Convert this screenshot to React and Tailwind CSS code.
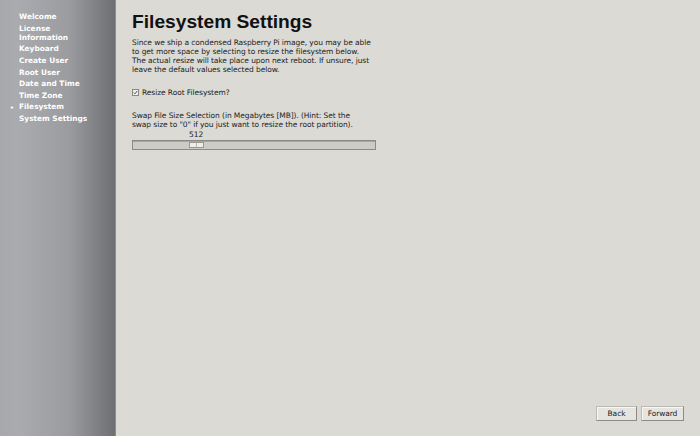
import React from 'react';

const steps = [
  ['Welcome'],
  ['License', 'Information'],
  ['Keyboard'],
  ['Create User'],
  ['Root User'],
  ['Date and Time'],
  ['Time Zone'],
  ['Filesystem'],
  ['System Settings'],
];

const Sidebar = ({ current }) => (
  <div className="w-[116px] h-full shrink-0 bg-[linear-gradient(to_right,#a6a8ab_0%,#a9abae_15%,#9a9c9f_60%,#6d6f72_100%)] border-r border-[#8a8d88] pt-[11px] pl-[19px] pr-2">
    {steps.map((s) => (
      <div key={s[0]} className="relative text-[7.4px] leading-[9px] py-[1.3px] font-bold text-white whitespace-nowrap">
        {s[0] === current && (
          <span className="absolute -left-[8px] top-[1.5px] text-[5.5px]">▸</span>
        )}
        {s.map((l) => (
          <span key={l} className="block">{l}</span>
        ))}
      </div>
    ))}
  </div>
);

const Button = ({ children, w }) => (
  <button className={`${w} h-[15px] text-[7.5px] tracking-[-0.08px] leading-none text-[#222] bg-[#e6e4df] border border-[#bdbab4] border-b-[#8e8b85] border-r-[#8e8b85] shadow-[inset_1px_1px_0_#f7f6f3]`}>
    {children}
  </button>
);

export default function App() {
  return (
    <div className="w-[700px] h-[436px] flex bg-[#dcdad5] text-[#1a1a1a] font-['DejaVu_Sans',sans-serif] overflow-hidden">
      <Sidebar current="Filesystem" />
      <div className="flex-1 flex flex-col pl-[16px] pr-[16px] pt-[10px] pb-[15px]">
        <h1 className="font-['Liberation_Sans',Arial,sans-serif] font-bold text-[19.2px] leading-[24px] text-[#111]">
          Filesystem Settings
        </h1>
        <p className="mt-[4px] w-[240px] text-[7.5px] tracking-[-0.09px] leading-[9px] text-[#222]">
          Since we ship a condensed Raspberry Pi image, you may be able to get more space by selecting to resize the filesystem below. The actual resize will take place upon next reboot. If unsure, just leave the default values selected below.
        </p>
        <label className="mt-[14px] flex items-center gap-[3px] text-[7.5px] tracking-[-0.08px] leading-[9px] text-[#222]">
          <span className="w-[7px] h-[7px] border border-[#8a8883] bg-[#f0efeb] flex items-center justify-center">
            <svg width="5" height="5" viewBox="0 0 5 5">
              <path d="M0.8 2.6 L2 3.8 L4.2 1" fill="none" stroke="#444" strokeWidth="0.9" />
            </svg>
          </span>
          Resize Root Filesystem?
        </label>
        <p className="mt-[14px] w-[236px] text-[7.5px] tracking-[-0.09px] leading-[9px] text-[#222]">
          Swap File Size Selection (in Megabytes [MB]). (Hint: Set the swap size to "0" if you just want to resize the root partition).
        </p>
        <div className="w-[244px]">
          <div className="pl-[57px] text-[7.5px] leading-[10px] mt-[1px] text-[#222]">512</div>
          <div className="h-[10px] border border-[#8c8a85] bg-[#cdcbc6] shadow-[inset_0_1px_0_#a8a6a1] flex items-center">
            <div className="ml-[56px] w-[15px] h-[6px] bg-[#eeede9] border border-[#9a9893] flex justify-center">
              <div className="w-px h-full bg-[#b8b6b1]" />
            </div>
          </div>
        </div>
        <div className="flex-1" />
        <div className="flex justify-end gap-[4px]">
          <Button w="w-[41px]">Back</Button>
          <Button w="w-[43px]">Forward</Button>
        </div>
      </div>
    </div>
  );
}
